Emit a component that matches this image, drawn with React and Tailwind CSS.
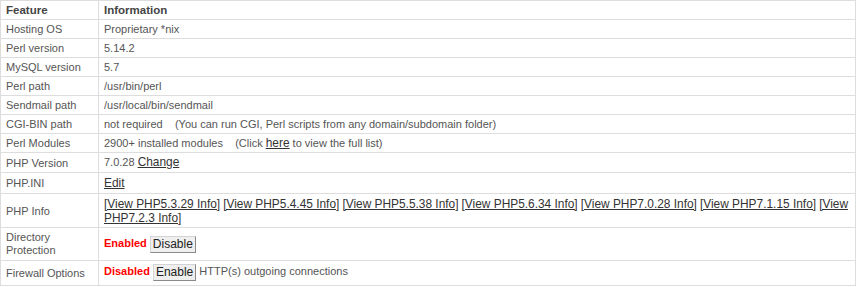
import React from "react";

const L = ({ children }) => (
  <a href="#" className="text-[11.9px] leading-[12px] text-[#333] underline">
    {children}
  </a>
);

const Btn = ({ children }) => (
  <button className="text-[12px] leading-[13px] text-[#222] bg-[#efefef] border border-t-[#d4d4d4] border-l-[#d4d4d4] border-r-[#8a8a8a] border-b-[#8a8a8a] px-[2px] py-[1px] align-middle">
    {children}
  </button>
);

const rows = [
  ["Hosting OS", "Proprietary *nix"],
  ["Perl version", "5.14.2"],
  ["MySQL version", "5.7"],
  ["Perl path", "/usr/bin/perl"],
  ["Sendmail path", "/usr/local/bin/sendmail"],
  [
    "CGI-BIN path",
    <>not required{"\u00a0\u00a0\u00a0\u00a0"}(You can run CGI, Perl scripts from any domain/subdomain folder)</>,
  ],
  [
    "Perl Modules",
    <>2900+ installed modules{"\u00a0\u00a0\u00a0\u00a0"}(Click <L>here</L> to view the full list)</>,
  ],
  ["PHP Version", <>7.0.28 <L>Change</L></>, "leading-[13px] py-[3px]"],
  ["PHP.INI", <L>Edit</L>, "leading-[14px] py-[3px]"],
  [
    "PHP Info",
    <>
      <L>[View PHP5.3.29 Info]</L> <L>[View PHP5.4.45 Info]</L> <L>[View PHP5.5.38 Info]</L>{" "}
      <L>[View PHP5.6.34 Info]</L> <L>[View PHP7.0.28 Info]</L> <L>[View PHP7.1.15 Info]</L>{" "}
      <L>[View</L> <L>PHP7.2.3 Info]</L>
    </>,
    "leading-[14px] pt-[3px] pb-[2px]",
  ],
  [
    "Directory Protection",
    <>
      <span className="font-bold text-[#ff0000]">Enabled</span> <Btn>Disable</Btn>
    </>,
    "leading-[13px] py-[3px]",
  ],
  [
    "Firewall Options",
    <>
      <span className="font-bold text-[#ff0000]">Disabled</span> <Btn>Enable</Btn> HTTP(s) outgoing connections
    </>,
    "pt-[3px] pb-[4px]",
  ],
];

export default function App() {
  return (
    <div className="bg-white w-[857px] h-[287px]" style={{ fontFamily: '"Liberation Sans", Arial, sans-serif' }}>
      <table className="w-[856px] border-collapse text-[11px] leading-[12px] text-[#555]">
        <thead>
          <tr>
            <th className="w-[98px] border border-[#dddddd] pl-[5px] pr-[2px] py-[3px] text-left font-bold text-[11.5px] text-[#444]">
              Feature
            </th>
            <th className="border border-[#dddddd] pl-[5px] pr-[2px] py-[3px] text-left font-bold text-[11.5px] text-[#444]">
              Information
            </th>
          </tr>
        </thead>
        <tbody>
          {rows.map(([k, v, extra], i) => (
            <tr key={i}>
              <td
                className={
                  "border border-[#dddddd] pl-[5px] pr-[2px] align-middle " +
                  (i === 10 ? "leading-[13px] py-[3px]" : "py-[3px]")
                }
              >
                {k}
              </td>
              <td className={"border border-[#dddddd] pl-[5px] pr-[2px] align-middle " + (extra || "py-[3px]")}>
                {v}
              </td>
            </tr>
          ))}
        </tbody>
      </table>
    </div>
  );
}
